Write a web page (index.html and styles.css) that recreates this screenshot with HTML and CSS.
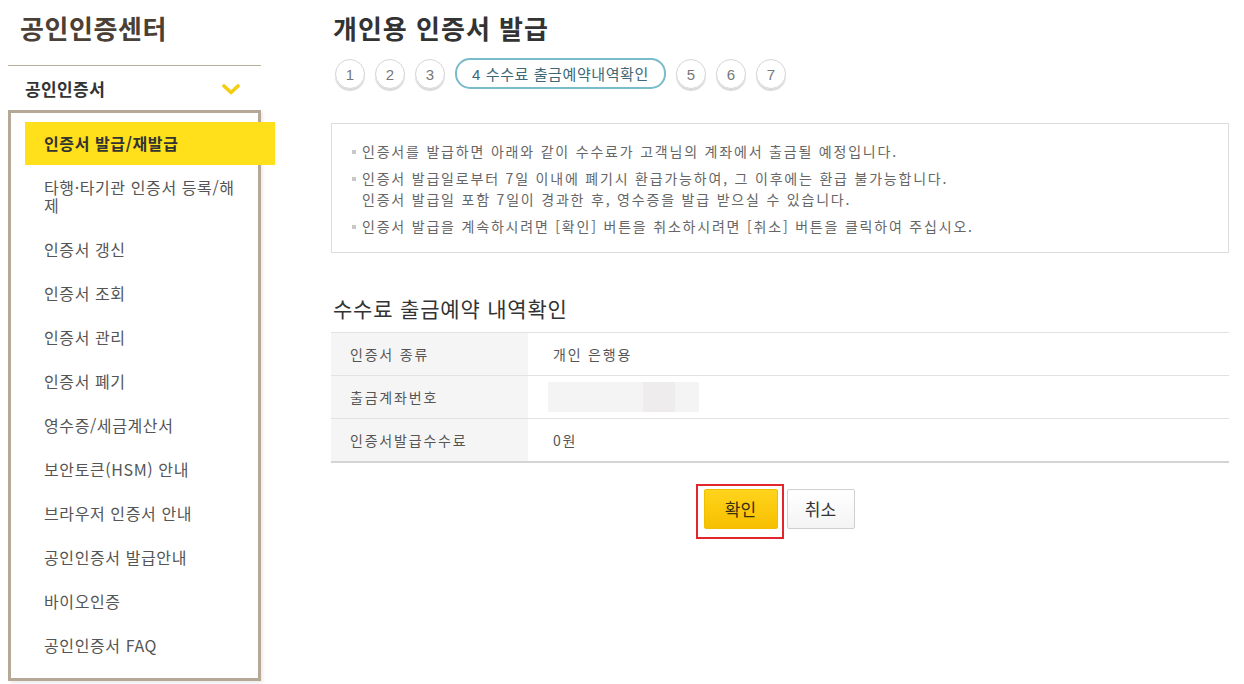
FILE: index.html
```html
<!DOCTYPE html>
<html lang="ko">
<head>
  <meta charset="UTF-8">
  <title>개인용 인증서 발급</title>
  <link rel="stylesheet" href="styles.css">
</head>
<body>
  <div class="wrap">
    <!-- Sidebar -->
    <aside class="sidebar">
      <h2 class="side-title">공인인증센터</h2>
      <div class="side-sub">
        <span>공인인증서</span>
        <svg class="chev" width="18" height="11" viewBox="0 0 18 11">
          <path d="M2 2 L9 8.5 L16 2" fill="none" stroke="#f5cd10" stroke-width="3.6" stroke-linecap="round" stroke-linejoin="round"/>
        </svg>
      </div>
      <ul class="menu">
        <li class="on">인증서 발급/재발급</li>
        <li>타행·타기관 인증서 등록/해제</li>
        <li>인증서 갱신</li>
        <li>인증서 조회</li>
        <li>인증서 관리</li>
        <li>인증서 폐기</li>
        <li>영수증/세금계산서</li>
        <li>보안토큰(HSM) 안내</li>
        <li>브라우저 인증서 안내</li>
        <li>공인인증서 발급안내</li>
        <li>바이오인증</li>
        <li>공인인증서 FAQ</li>
      </ul>
    </aside>

    <!-- Content -->
    <main class="content">
      <h1 class="page-title">개인용 인증서 발급</h1>
      <div class="steps">
        <span class="step">1</span>
        <span class="step">2</span>
        <span class="step">3</span>
        <span class="step current">4 수수료 출금예약내역확인</span>
        <span class="step">5</span>
        <span class="step">6</span>
        <span class="step">7</span>
      </div>

      <div class="notice">
        <ul>
          <li>인증서를 발급하면 아래와 같이 수수료가 고객님의 계좌에서 출금될 예정입니다.</li>
          <li>인증서 발급일로부터 7일 이내에 폐기시 환급가능하여, 그 이후에는 환급 불가능합니다.<br>인증서 발급일 포함 7일이 경과한 후, 영수증을 발급 받으실 수 있습니다.</li>
          <li>인증서 발급을 계속하시려면 [확인] 버튼을 취소하시려면 [취소] 버튼을 클릭하여 주십시오.</li>
        </ul>
      </div>

      <h3 class="sec-title">수수료 출금예약 내역확인</h3>
      <table class="info-table">
        <tr>
          <th>인증서 종류</th>
          <td>개인 은행용</td>
        </tr>
        <tr>
          <th>출금계좌번호</th>
          <td><span class="masked"><span class="masked-band"></span></span></td>
        </tr>
        <tr>
          <th>인증서발급수수료</th>
          <td>0원</td>
        </tr>
      </table>

      <div class="btn-area">
        <span class="highlight"><button class="btn btn-ok">확인</button></span>
        <button class="btn btn-cancel">취소</button>
      </div>
    </main>
  </div>
</body>
</html>
```

FILE: styles.css
```css
* {
  margin: 0;
  padding: 0;
  box-sizing: border-box;
}
body {
  font-family: "Noto Sans CJK KR", "Noto Sans", sans-serif;
  background: #ffffff;
  color: #333;
}
ul {
  list-style: none;
}
.wrap {
  display: flex;
  width: 1244px;
  height: 684px;
  overflow: hidden;
}

/* sidebar */
.sidebar {
  width: 253px;
  margin-left: 8px;
  flex-shrink: 0;
}
.side-title {
  height: 66px;
  padding: 10px 0 0 12px;
  font-size: 26px;
  font-weight: bold;
  color: #4b4036;
  line-height: 36px;
  letter-spacing: 0.6px;
  border-bottom: 1px solid #b9ad9d;
}
.side-sub {
  display: flex;
  align-items: center;
  justify-content: space-between;
  height: 44px;
  padding: 0 21px 0 17px;
  font-size: 17px;
  font-weight: bold;
  letter-spacing: 0.4px;
  color: #333;
}
.chev {
  margin-top: 2px;
}
.menu {
  border: 3px solid #b5a897;
  height: 571px;
  padding-top: 9px;
  box-shadow: 2px 2px 3px rgba(0, 0, 0, 0.08);
}
.menu li {
  width: 210px;
  margin-left: 14px;
  padding: 13px 0 13px 19px;
  font-size: 16px;
  line-height: 18px;
  letter-spacing: 0.6px;
  color: #555;
}
.menu li.on {
  width: 250px;
  background: #ffe01b;
  font-weight: bold;
  color: #333;
  padding-top: 12px;
}

/* content */
.content {
  margin-left: 70px;
  width: 898px;
}
.page-title {
  padding: 11px 0 0 2px;
  font-size: 26px;
  font-weight: bold;
  color: #333;
  line-height: 34px;
  letter-spacing: 1px;
}
.steps {
  display: flex;
  gap: 10px;
  margin: 14px 0 0 4px;
}
.step {
  display: flex;
  align-items: center;
  justify-content: center;
  min-width: 30px;
  height: 30px;
  border: 1px solid #d6d6d6;
  border-radius: 15px;
  box-shadow: 0 2px 1px #d8d8d8;
  font-family: "Liberation Sans", "Noto Sans CJK KR", sans-serif;
  font-size: 15px;
  color: #777;
}
.step.current {
  width: 211px;
  height: 31px;
  margin-top: -1px;
  border: 2px solid #78bcc9;
  box-shadow: none;
  font-size: 15px;
  letter-spacing: 0.6px;
  color: #3b6874;
}

.notice {
  margin-top: 34px;
  height: 130px;
  border: 1px solid #dcdcdc;
  padding: 17px 0 0 20px;
}
.notice li {
  position: relative;
  padding-left: 10px;
  margin-bottom: 6px;
  font-size: 14px;
  line-height: 21px;
  letter-spacing: 1.8px;
  color: #666;
}
.notice li::before {
  content: "";
  position: absolute;
  left: 0;
  top: 9px;
  width: 4px;
  height: 4px;
  background: #c8c8c8;
}

.sec-title {
  margin-top: 41px;
  padding-left: 2px;
  font-size: 21px;
  font-weight: normal;
  color: #333;
  line-height: 28px;
  letter-spacing: 0.8px;
}
.info-table {
  width: 100%;
  margin-top: 10px;
  border-collapse: collapse;
  border-top: 1px solid #e2e2e2;
  border-bottom: 2px solid #d4d4d4;
}
.info-table th,
.info-table td {
  height: 43px;
  text-align: left;
  font-size: 14px;
  font-weight: normal;
  letter-spacing: 1.8px;
  color: #555;
  border-bottom: 1px solid #e2e2e2;
}
.info-table th {
  width: 197px;
  padding-left: 19px;
  background: #f5f5f5;
}
.info-table td {
  padding-left: 25px;
}
.masked {
  display: block;
  width: 151px;
  height: 30px;
  margin-left: -5px;
  background: #f4f4f4;
  position: relative;
}
.masked-band {
  position: absolute;
  left: 95px;
  top: 0;
  width: 32px;
  height: 30px;
  background: #eeecec;
}

.btn-area {
  display: flex;
  align-items: flex-start;
  justify-content: center;
  gap: 3px;
  margin-top: 21px;
  padding-right: 10px;
}
.highlight {
  display: block;
  border: 2px solid #e3262c;
  padding: 3px 4px 8px 6px;
}
.btn {
  height: 40px;
  font-family: "Noto Sans CJK KR", sans-serif;
  font-size: 17px;
  border-radius: 2px;
  cursor: pointer;
}
.btn-ok {
  width: 74px;
  border: 1px solid #f0c000;
  background: linear-gradient(#ffd41c, #f7bf00);
  color: #3a2f10;
}
.btn-cancel {
  width: 68px;
  margin-top: 5px;
  border: 1px solid #cfcfcf;
  background: linear-gradient(#ffffff, #f4f4f4);
  color: #333;
}
```
